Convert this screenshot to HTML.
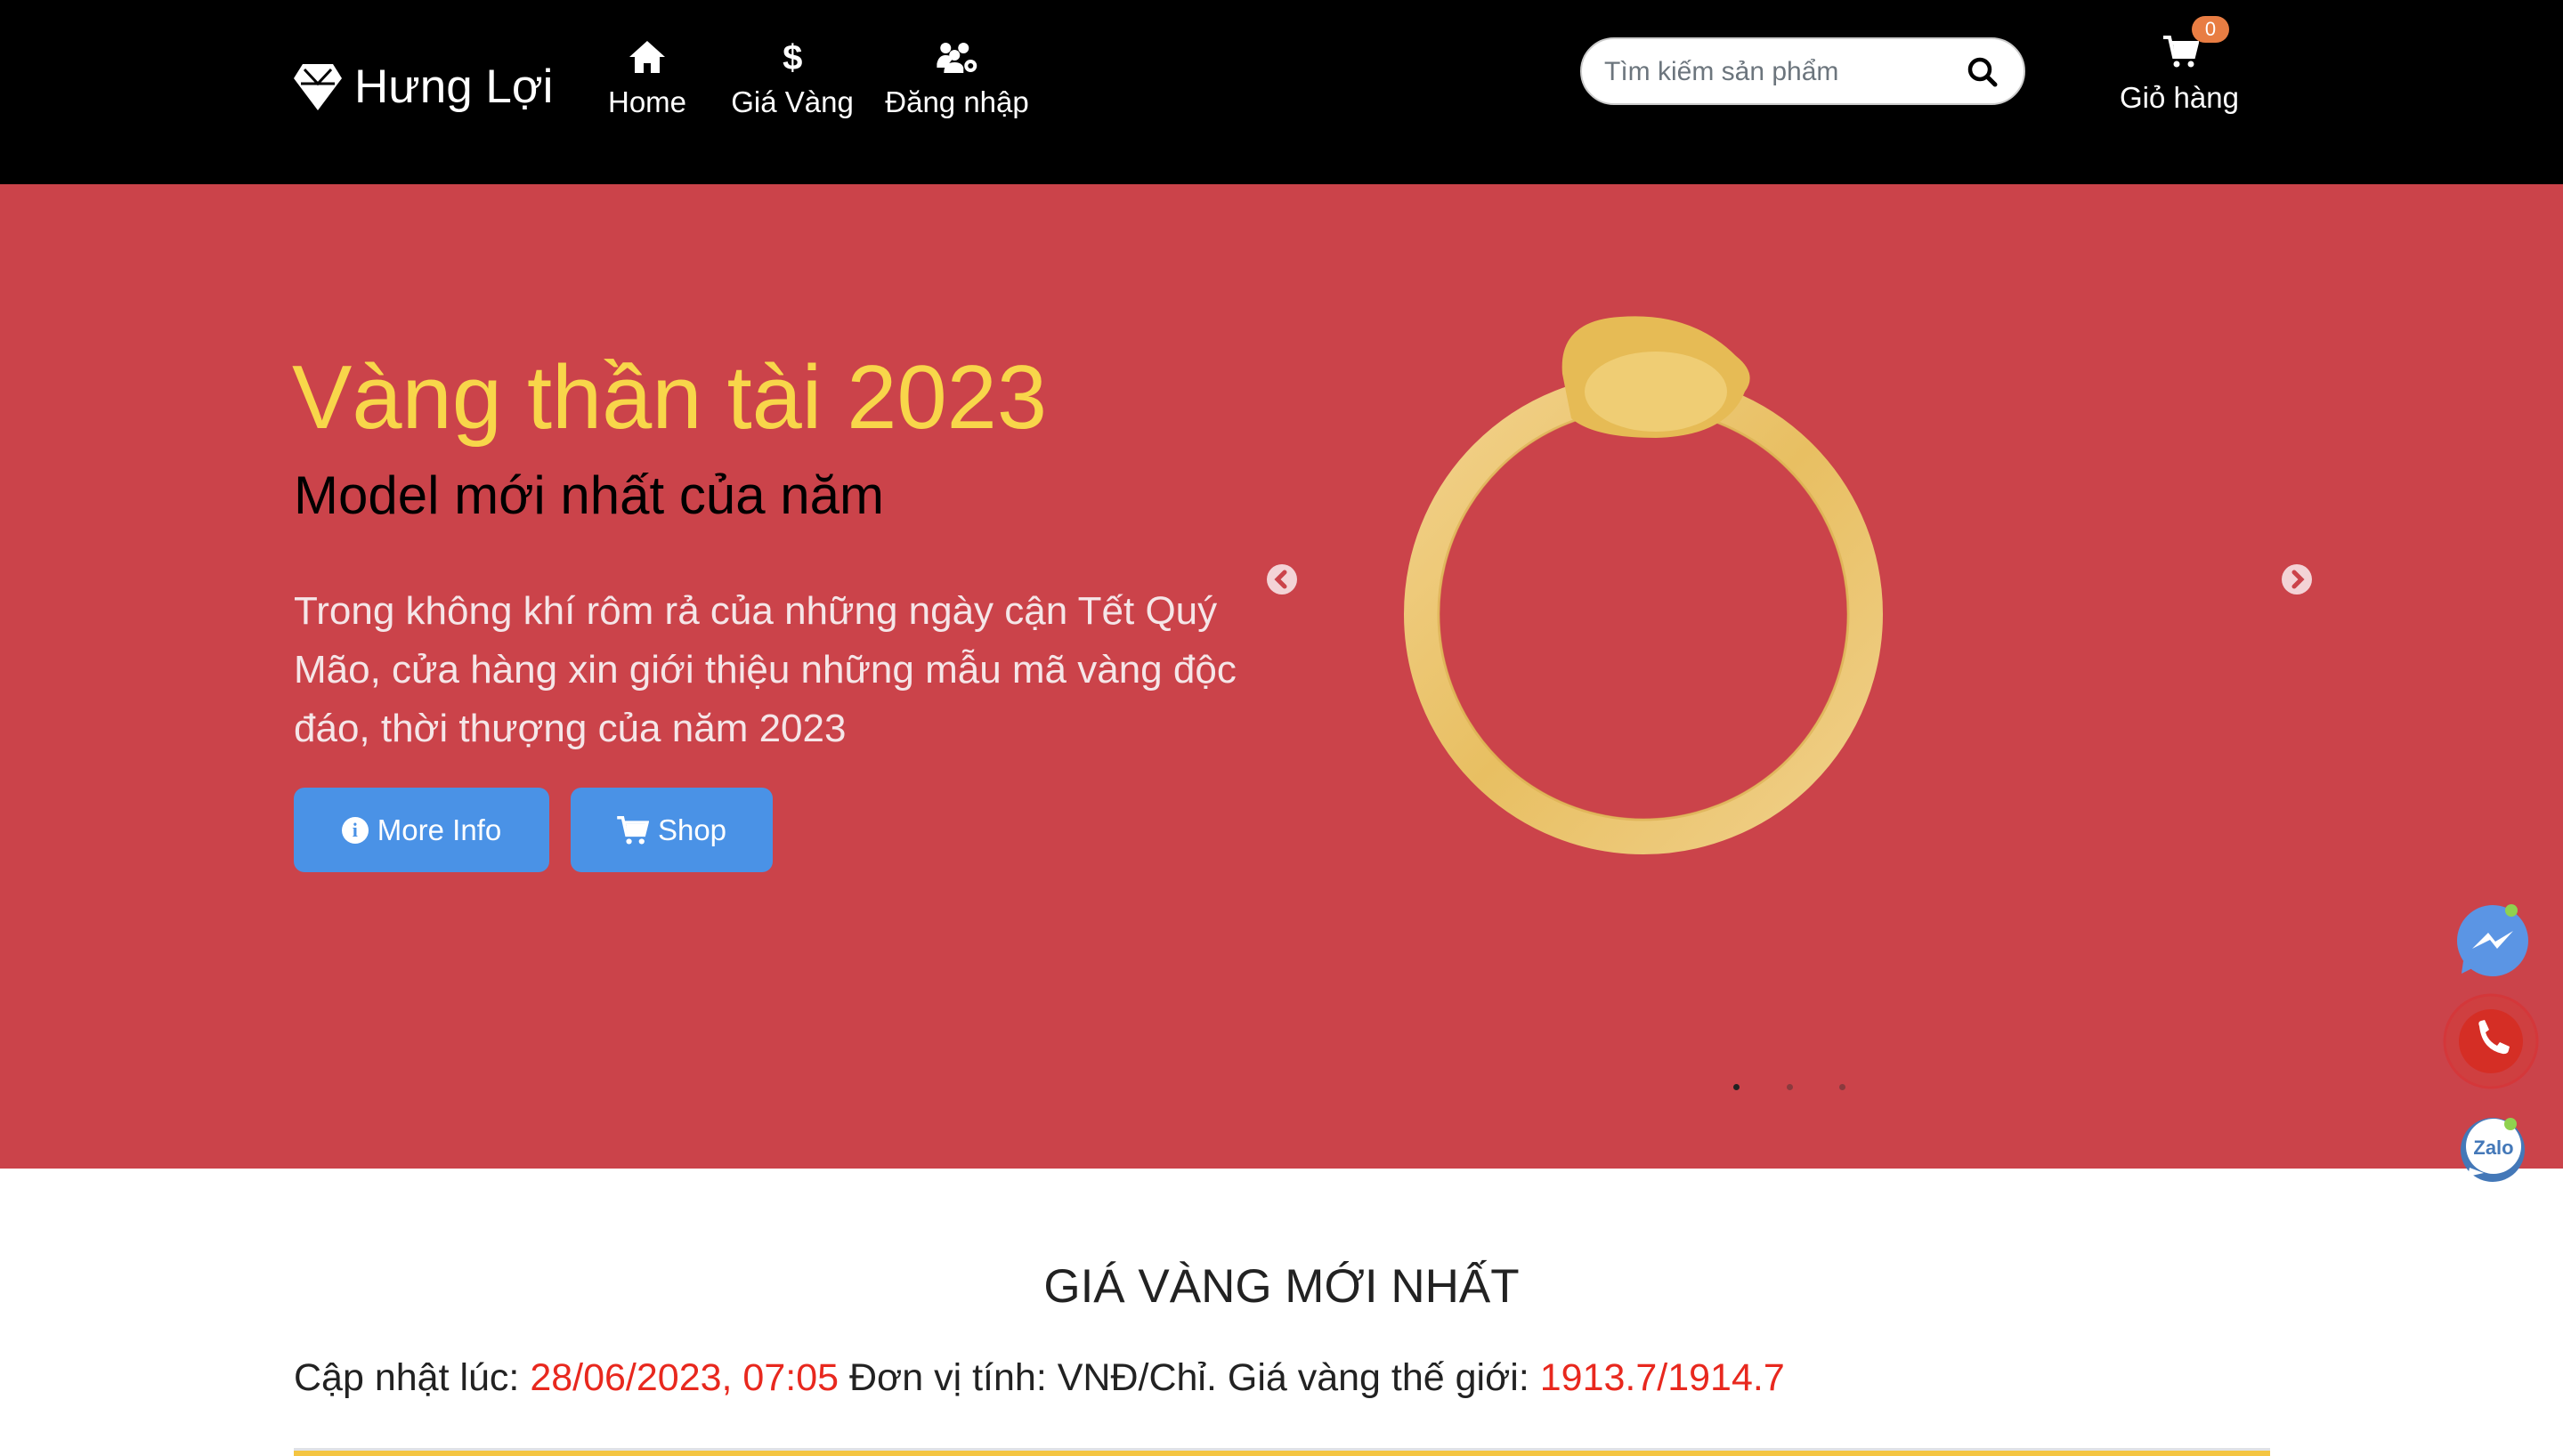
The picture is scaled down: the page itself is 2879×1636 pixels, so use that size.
<!DOCTYPE html>
<html><head><meta charset="utf-8">
<style>
*{margin:0;padding:0;box-sizing:border-box}
body{width:2879px;height:1636px;overflow:hidden;background:#fff;font-family:"Liberation Sans","DejaVu Sans",sans-serif;position:relative}
.hdr{position:absolute;left:0;top:0;width:2879px;height:207px;background:#000;color:#fff}
.abs{position:absolute}
.nav{position:absolute;top:46px;text-align:center;font-size:33px;color:#fff;transform:translateX(-50%);white-space:nowrap}
.nav svg{display:block;margin:0 auto 14px}
.banner{position:absolute;left:0;top:207px;width:2879px;height:1106px;background:#cb434a}
.btn{position:absolute;top:885px;height:95px;background:#4a92e6;border-radius:12px;color:#fff;font-size:33px;display:flex;align-items:center;justify-content:center;gap:10px}
</style></head><body>
<div class="hdr">
  <svg class="abs" style="left:330px;top:72px" width="54" height="52" viewBox="0 0 54 52"><path d="M0 16 L10 0 H44 L54 16 L27 52 Z" fill="#fff"/><path d="M12 6 L27 22 L42 6 M8 22 H46" stroke="#000" stroke-width="3" fill="none"/></svg>
  <div class="abs" style="left:398px;top:67px;font-size:53px;color:#fff">Hưng Lợi</div>
  <div class="nav" style="left:727px"><svg width="40" height="36" viewBox="0 0 40 36"><path d="M20 0 L40 18 H34 V36 H24 V25 H16 V36 H6 V18 H0 Z" fill="#fff"/></svg>Home</div>
  <div class="nav" style="left:890px"><svg width="24" height="36" viewBox="0 0 24 36"><text x="12" y="32" text-anchor="middle" font-size="40" font-weight="bold" fill="#fff" font-family="Liberation Sans">$</text></svg>Giá Vàng</div>
  <div class="nav" style="left:1075px"><svg width="46" height="36" viewBox="0 0 46 36"><circle cx="10" cy="8" r="6" fill="#fff"/><circle cx="30" cy="8" r="6" fill="#fff"/><circle cx="20" cy="16" r="6" fill="#fff"/><path d="M0 26 Q2 16 10 16 Q16 16 18 20 L10 30 H0Z M8 36 Q8 24 20 24 Q28 24 30 30 V36Z" fill="#fff"/><circle cx="38" cy="28" r="7" fill="#fff"/><circle cx="38" cy="28" r="3" fill="#000"/></svg>Đăng nhập</div>
  <div class="abs" style="left:1775px;top:42px;width:500px;height:76px;background:#fff;border:2px solid #ccc;border-radius:38px"></div>
  <div class="abs" style="left:1802px;top:64px;font-size:30px;color:#6c757d">Tìm kiếm sản phẩm</div>
  <svg class="abs" style="left:2210px;top:64px" width="34" height="34" viewBox="0 0 34 34"><circle cx="14" cy="14" r="11" stroke="#000" stroke-width="4.5" fill="none"/><path d="M22 22 L31 31" stroke="#000" stroke-width="5" stroke-linecap="round"/></svg>
  <svg class="abs" style="left:2430px;top:40px" width="40" height="36" viewBox="0 0 40 36"><path d="M0 2 H7 L12 24 H34 L38 8 H10" stroke="#fff" stroke-width="4" fill="none"/><path d="M11 10 H36 L33 22 H13Z" fill="#fff"/><circle cx="15" cy="32" r="3.5" fill="#fff"/><circle cx="31" cy="32" r="3.5" fill="#fff"/></svg>
  <div class="abs" style="left:2462px;top:18px;width:42px;height:30px;border-radius:15px;background:#e87d43;color:#fff;font-size:22px;text-align:center;line-height:30px">0</div>
  <div class="abs" style="left:2381px;top:91px;font-size:33px;color:#fff">Giỏ hàng</div>
</div>
<div class="banner">
  <div class="abs" style="left:328px;top:180px;font-size:101px;color:#f8d64a;line-height:1.2">Vàng thần tài 2023</div>
  <div class="abs" style="left:330px;top:314px;font-size:60px;color:#000;line-height:1.2">Model mới nhất của năm</div>
  <div class="abs" style="left:330px;top:447px;width:1090px;font-size:44px;color:#f5e6e8;line-height:66px">Trong không khí rôm rả của những ngày cận Tết Quý Mão, cửa hàng xin giới thiệu những mẫu mã vàng độc đáo, thời thượng của năm 2023</div>
</div>
<div class="btn" style="left:330px;width:287px"><span style="display:inline-block;width:30px;height:30px;border-radius:50%;background:#fff;color:#4a92e6;font-size:22px;font-weight:bold;text-align:center;line-height:30px;font-family:'Liberation Serif',serif">i</span>More Info</div>
<div class="btn" style="left:641px;width:227px"><svg width="36" height="32" viewBox="0 0 40 36"><path d="M0 2 H7 L12 24 H34 L38 8 H10" stroke="#fff" stroke-width="4" fill="none"/><path d="M11 10 H36 L33 22 H13Z" fill="#fff"/><circle cx="15" cy="32" r="3.5" fill="#fff"/><circle cx="31" cy="32" r="3.5" fill="#fff"/></svg>Shop</div>
<svg class="abs" style="left:1422px;top:633px" width="36" height="36" viewBox="0 0 36 36"><circle cx="18" cy="18" r="17" fill="#f3d3d6"/><path d="M21 10 L13 18 L21 26" stroke="#cb434a" stroke-width="5" fill="none" stroke-linecap="round"/></svg>
<svg class="abs" style="left:2562px;top:633px" width="36" height="36" viewBox="0 0 36 36"><circle cx="18" cy="18" r="17" fill="#f3d3d6"/><path d="M15 10 L23 18 L15 26" stroke="#cb434a" stroke-width="5" fill="none" stroke-linecap="round"/></svg>
<svg class="abs" style="left:1560px;top:340px" width="580" height="620" viewBox="1560 340 580 620">
  <defs><linearGradient id="g" x1="0" y1="0" x2="1" y2="1"><stop offset="0" stop-color="#f2d28c"/><stop offset="0.5" stop-color="#e8bf62"/><stop offset="1" stop-color="#f0d08a"/></linearGradient></defs>
  <ellipse cx="1846" cy="690" rx="249" ry="250" fill="none" stroke="url(#g)" stroke-width="40"/>
  <ellipse cx="1846" cy="690" rx="230" ry="231" fill="none" stroke="#d9ab4c" stroke-width="3" opacity=".6"/>
  <path d="M1755 420 Q1750 360 1820 356 Q1900 350 1950 400 Q1975 420 1960 440 Q1940 490 1860 492 Q1790 492 1765 470 Z" fill="#e6bb55"/>
  <ellipse cx="1860" cy="440" rx="80" ry="45" fill="#efcd74"/>
</svg>
<div class="abs" style="left:1947px;top:1218px;width:7px;height:7px;border-radius:50%;background:#222"></div>
<div class="abs" style="left:2007px;top:1218px;width:7px;height:7px;border-radius:50%;background:#8a3a3e"></div>
<div class="abs" style="left:2066px;top:1218px;width:7px;height:7px;border-radius:50%;background:#8a3a3e"></div>
<svg class="abs" style="left:2755px;top:1010px" width="90" height="90" viewBox="0 0 90 90"><circle cx="45" cy="47" r="40" fill="#5b95e4"/><path d="M12 70 L10 84 L26 76Z" fill="#5b95e4"/><path d="M22 56 L40 38 L48 48 L68 36 L50 56 L42 46Z" fill="#fff"/><circle cx="66" cy="13" r="7" fill="#8fd14f"/></svg>
<svg class="abs" style="left:2743px;top:1115px" width="110" height="110" viewBox="0 0 110 110"><circle cx="55" cy="55" r="52" fill="#cf3f40" stroke="#d4373a" stroke-width="3"/><circle cx="55" cy="55" r="36" fill="#d52e25"/><path d="M42 38 Q40 33 44 32 L48 31 L53 42 L49 45 Q52 55 62 60 L65 56 L76 61 L75 65 Q74 70 68 69 Q45 64 42 38Z" fill="#fff"/></svg>
<svg class="abs" style="left:2760px;top:1252px" width="80" height="80" viewBox="0 0 80 80"><circle cx="40" cy="40" r="36" fill="#4478b8"/><circle cx="41" cy="36" r="31" fill="#fff"/><path d="M14 60 L30 66 L12 70Z" fill="#fff"/><text x="41" y="45" text-anchor="middle" font-size="22" font-weight="bold" fill="#4478b8" font-family="Liberation Sans">Zalo</text><circle cx="60" cy="11" r="7" fill="#8fd14f"/></svg>
<div class="abs" style="left:0;width:2879px;top:1415px;text-align:center;font-size:53px;color:#222">GIÁ VÀNG MỚI NHẤT</div>
<div class="abs" style="left:330px;top:1524px;font-size:43px;color:#222;white-space:nowrap">Cập nhật lúc: <span style="color:#e8281e">28/06/2023, 07:05</span> Đơn vị tính: VNĐ/Chỉ. Giá vàng thế giới: <span style="color:#e8281e">1913.7/1914.7</span></div>
<div class="abs" style="left:330px;top:1627px;width:2220px;height:3px;background:#e0e2e6"></div>
<div class="abs" style="left:330px;top:1630px;width:2220px;height:6px;background:#f4c542"></div>
</body></html>
